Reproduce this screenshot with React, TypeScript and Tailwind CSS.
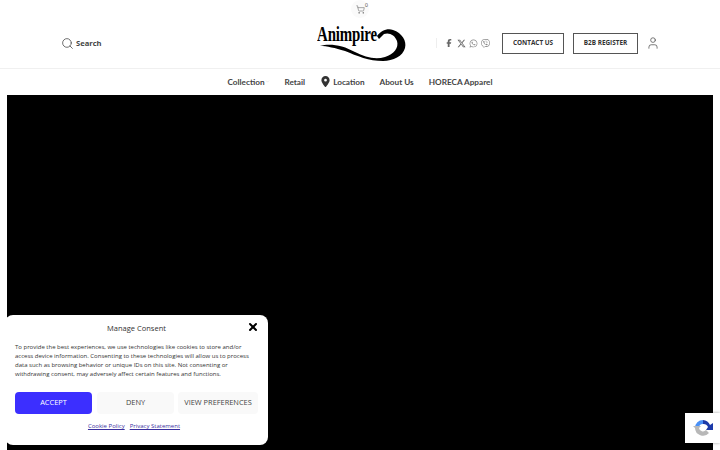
import { ChevronDown, Search, ShoppingCart, User, X } from "lucide-react";
import { FaFacebookF, FaLocationDot, FaViber, FaWhatsapp, FaXTwitter } from "react-icons/fa6";

function Logo() {
  return (
    <div className="relative h-[40px] w-[90px]">
      <span className="absolute left-0 top-0 origin-left scale-x-[0.71] text-[21px] font-bold leading-[22px] tracking-[-0.2px] text-black [font-family:'Liberation_Serif',serif]">
        Animpire
      </span>
      <svg viewBox="0 0 90 40" className="absolute inset-0 h-[40px] w-[90px]" aria-hidden="true">
        <path d="M3 23 C12 20 26 22 38 29 C48 34 58 37 68 34 C77 31 82 25 80 18 C78 12 72 9 67 11 L62 16 L60 13 C64 8 70 5 76 7 C85 10 90 18 88 25 C86 33 76 38 66 38 C52 38 40 33 28 28 C18 25 10 23 3 23 Z" fill="#000" />
      </svg>
    </div>
  );
}

export default function App() {
  return (
    <div className="relative flex h-[450px] w-[720px] flex-col overflow-hidden bg-white [font-family:Lato,sans-serif]">
      <div className="absolute left-[351px] top-0 flex h-[18px] w-[18px] items-center justify-center rounded-full bg-[#fafafa]">
        <ShoppingCart size={9} strokeWidth={1.5} className="text-[#666]" />
        <span className="absolute left-[14px] top-[2px] text-[5px] leading-[6px] text-[#555]">0</span>
      </div>

      <header className="flex h-[69px] shrink-0 items-center justify-between border-b border-[#f0f0f0] pl-[61px] pr-[60px] pt-[18px]">
        <div className="flex w-[227px] items-center gap-[2px]">
          <Search size={13} strokeWidth={1.4} className="text-[#444]" />
          <span className="text-[7.6px] font-bold leading-[13px] text-[#444] [font-family:'Open_Sans',sans-serif]">Search</span>
        </div>
        <Logo />
        <div className="flex items-center">
          <div className="mr-[6px] h-[10px] w-px bg-[#eeeeee]" />
          <div className="flex items-center text-[#666]">
            <span className="flex w-[12px] justify-center"><FaFacebookF size={8} /></span>
            <span className="flex w-[12px] justify-center"><FaXTwitter size={9} /></span>
            <span className="flex w-[12px] justify-center"><FaWhatsapp size={9} className="text-[#888]" /></span>
            <span className="flex w-[12px] justify-center"><FaViber size={9} className="text-[#888]" /></span>
          </div>
          <button className="ml-[11px] h-[21px] w-[62px] border border-[#555] text-[6.4px] font-bold text-[#333] [font-family:'Open_Sans',sans-serif]">
            CONTACT US
          </button>
          <button className="ml-[9px] h-[21px] w-[65px] border border-[#555] text-[6.4px] font-bold text-[#333] [font-family:'Open_Sans',sans-serif]">
            B2B REGISTER
          </button>
          <User size={14} strokeWidth={1.2} className="ml-[8px] text-[#444]" />
        </div>
      </header>

      <nav className="flex h-[26px] shrink-0 items-center justify-center gap-[15px] text-[8.2px] font-bold text-[#444]">
        <span className="flex items-center">
          Collection <ChevronDown size={5} className="text-[#ccc]" />
        </span>
        <span>Retail</span>
        <span className="flex items-center gap-[2px]">
          <FaLocationDot size={11} className="text-[#333]" />
          Location
        </span>
        <span>About Us</span>
        <span>HORECA Apparel</span>
      </nav>

      <main className="mx-[7px] flex-1 bg-black" />

      <div className="absolute left-[5px] top-[315px] flex h-[130px] w-[263px] flex-col rounded-[8px] bg-white px-[10px] [font-family:'Open_Sans',sans-serif]">
        <div className="relative mt-[7px] text-center text-[7.5px] leading-[12px] text-[#333]">
          Manage Consent
          <X size={12} strokeWidth={4} className="absolute right-[-1px] top-[-1px] text-black" />
        </div>
        <p className="mt-[9px] text-[6px] leading-[9px] text-[#333]">
          To provide the best experiences, we use technologies like cookies to store and/or access device information. Consenting to these technologies will allow us to process data such as browsing behavior or unique IDs on this site. Not consenting or withdrawing consent, may adversely affect certain features and functions.
        </p>
        <div className="mt-[13px] flex">
          <button className="h-[22px] w-[77px] rounded-[4px] bg-[#3c2fff] text-[7.4px] text-white">ACCEPT</button>
          <button className="ml-[5px] h-[22px] w-[77px] rounded-[4px] bg-[#f9f9f9] text-[7.4px] text-[#444]">DENY</button>
          <button className="ml-[4px] h-[22px] w-[80px] rounded-[4px] bg-[#f9f9f9] text-[7.4px] text-[#444]">VIEW PREFERENCES</button>
        </div>
        <div className="mt-[7px] flex justify-center gap-[5px] pr-[5px] text-[6px] leading-[10px] text-[#3a2f9f] underline">
          <span>Cookie Policy</span>
          <span>Privacy Statement</span>
        </div>
      </div>

      <div className="absolute left-[685px] top-[413px] flex h-[30px] w-[35px] items-center justify-start bg-white pl-[8px] shadow-[0_0_3px_rgba(0,0,0,0.35)]">
        <svg viewBox="0 0 20 20" className="h-[20px] w-[20px]" aria-hidden="true">
          <path d="M10 2 A8 8 0 0 0 2 10 L6 10 A4 4 0 0 1 10 6 Z" fill="#4a90f5" />
          <path d="M10 2 A8 8 0 0 1 17 7 L20 5 L20 12 L13 12 L15 9 A5 5 0 0 0 10 6 Z" fill="#1c3aa9" />
          <path d="M2 10 A8 8 0 0 0 16 15 L13 12 A4 4 0 0 1 6 10 L8 8 L0 8 Z" fill="#b8b8b8" />
        </svg>
      </div>
    </div>
  );
}
